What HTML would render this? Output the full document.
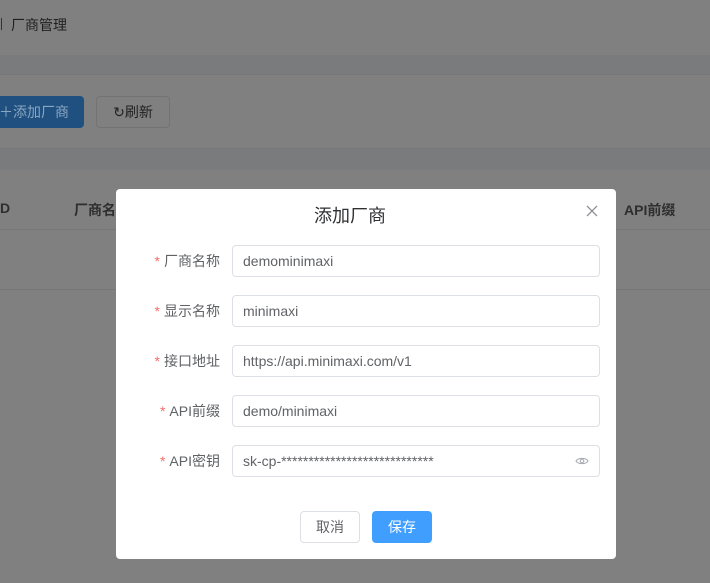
<!DOCTYPE html>
<html><head><meta charset="utf-8"><style>
*{box-sizing:border-box;margin:0;padding:0}
body{width:710px;height:583px;overflow:hidden;background:#808080;font-family:"Liberation Sans","Noto Sans CJK SC",sans-serif;position:relative;color:#303133}
.abs{position:absolute}
.strip{position:absolute;left:0;width:710px;background:#7a7b7d}
.modal{position:absolute;left:116px;top:189px;width:500px;height:370px;background:#fff;border-radius:4px}
.title{position:absolute;left:198px;top:13px;font-size:18px;color:#303133}
.row{position:absolute;left:0;width:500px;height:32px}
.lbl{position:absolute;right:396px;top:0;line-height:32px;font-size:14px;color:#606266;white-space:nowrap}
.lbl b{color:#f56c6c;font-weight:normal;margin-right:4px}
.inp{position:absolute;left:116px;width:368px;height:32px;border:1px solid #dcdfe6;border-radius:4px;font-size:14px;color:#606266;line-height:30px;padding-left:10px}
.btn{position:absolute;height:32px;border-radius:4px;font-size:14px;line-height:30px;text-align:center}
</style></head><body>
<div class="abs" style="left:11px;top:15px;font-size:14px;color:#1f1f1f">厂商管理</div>
<div class="abs" style="left:0;top:18px;width:2px;height:12px;border-right:1.5px solid #333"></div>
<div class="strip" style="top:55px;height:20px;border-bottom:1px solid #777"></div>
<div class="abs" style="left:-6px;top:96px;width:90px;height:32px;background:#20507f;border-radius:4px;font-size:14px;line-height:32px;padding-left:5px;color:#8aa6c2">＋添加厂商</div>
<div class="abs" style="left:96px;top:96px;width:74px;height:32px;border:1px solid #737373;border-radius:4px;font-size:14px;line-height:30px;text-align:center;color:#1f1f1f">↻刷新</div>
<div class="strip" style="top:148px;height:22px;border-top:1px solid #777"></div>
<div class="abs" style="left:0;top:200px;font-size:14px;font-weight:bold;color:#2e2e2e">D</div>
<div class="abs" style="left:74px;top:200px;font-size:14px;font-weight:bold;color:#2e2e2e">厂商名</div>
<div class="abs" style="left:624px;top:200px;font-size:14px;font-weight:bold;color:#2e2e2e">API前缀</div>
<div class="abs" style="left:0;top:229px;width:710px;border-top:1px solid #777"></div>
<div class="abs" style="left:0;top:289px;width:710px;border-top:1px solid #777"></div>
<div class="modal">
<div class="title">添加厂商</div>
<svg class="abs" style="left:470px;top:16px" width="12" height="12" viewBox="0 0 12 12"><path d="M1 1L11 11M11 1L1 11" stroke="#909399" stroke-width="1.3"/></svg>
<div class="row" style="top:56px"><div class="lbl"><b>*</b>厂商名称</div><div class="inp">demominimaxi</div></div>
<div class="row" style="top:106px"><div class="lbl"><b>*</b>显示名称</div><div class="inp">minimaxi</div></div>
<div class="row" style="top:156px"><div class="lbl"><b>*</b>接口地址</div><div class="inp">https://api.minimaxi.com/v1</div></div>
<div class="row" style="top:206px"><div class="lbl"><b>*</b>API前缀</div><div class="inp">demo/minimaxi</div></div>
<div class="row" style="top:256px"><div class="lbl"><b>*</b>API密钥</div><div class="inp">sk-cp-****************************
<svg class="abs" style="right:10px;top:10px" width="14" height="10" viewBox="0 0 14 10"><path d="M1 5C3 1.5 11 1.5 13 5C11 8.5 3 8.5 1 5Z" fill="none" stroke="#a8abb2" stroke-width="1.1"/><circle cx="7" cy="5" r="1.8" fill="none" stroke="#a8abb2" stroke-width="1.1"/></svg></div></div>
<div class="btn" style="left:184px;top:322px;width:60px;border:1px solid #dcdfe6;color:#606266">取消</div>
<div class="btn" style="left:256px;top:322px;width:60px;background:#409eff;color:#fff;line-height:32px">保存</div>
</div>
</body></html>
